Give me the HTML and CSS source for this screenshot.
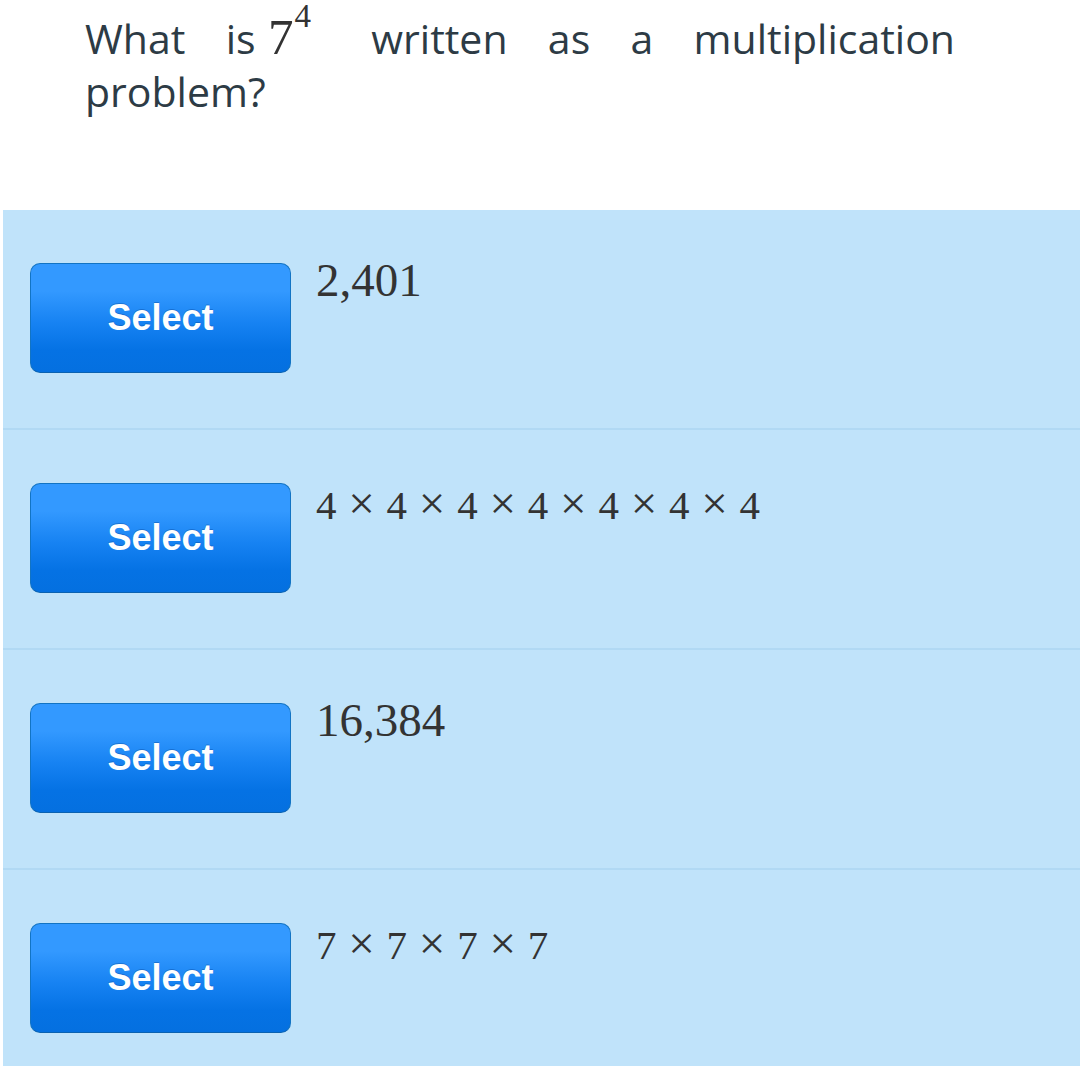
FILE: index.html
```html
<!DOCTYPE html>
<html lang="en">
<head>
  <meta charset="UTF-8" />
  <meta name="viewport" content="width=device-width, initial-scale=1.0"/>
  <title>Exponents</title>
  <link rel="stylesheet" href="styles.css">
</head>
<body>
  <p class="question">
    What is <span class="math">7<sup>4</sup></span> written as a multiplication problem?
  </p>

  <div class="choices">
    <div class="choice">
      <button class="select-btn">Select</button>
      <div class="answer num">2,401</div>
    </div>
    <div class="choice">
      <button class="select-btn">Select</button>
      <div class="answer expr">4<span class="times">×</span>4<span class="times">×</span>4<span class="times">×</span>4<span class="times">×</span>4<span class="times">×</span>4<span class="times">×</span>4</div>
    </div>
    <div class="choice">
      <button class="select-btn">Select</button>
      <div class="answer num">16,384</div>
    </div>
    <div class="choice">
      <button class="select-btn">Select</button>
      <div class="answer expr">7<span class="times">×</span>7<span class="times">×</span>7<span class="times">×</span>7</div>
    </div>
  </div>
</body>
</html>
```

FILE: styles.css
```css
body {
  margin: 0;
  background: #fff;
  font-family: "Open Sans", sans-serif;
}

.question {
  margin: 0;
  padding: 11px 125px 0 85px;
  height: 210px;
  box-sizing: border-box;
  font-size: 41px;
  line-height: 53px;
  color: #2d3b45;
  text-align: justify;
}

.math {
  font-family: "Liberation Serif", serif;
  font-size: 51px;
  color: #333;
  margin-left: -28px;
  margin-right: 20px;
}

.math sup {
  font-size: 33px;
  line-height: 0;
  vertical-align: 0;
  position: relative;
  top: -27px;
  margin-left: 1px;
}

.choices {
  margin-left: 3px;
  background: #c0e3fa;
  height: 856px;
}

.choice {
  display: flex;
  align-items: flex-start;
  gap: 25px;
  padding: 53px 0 55px 27px;
  border-bottom: 2px solid #b1d9f4;
}

.choice:last-child {
  border-bottom: none;
}

.select-btn {
  flex: none;
  width: 261px;
  height: 110px;
  box-sizing: border-box;
  border: 1px solid #1274c4;
  border-bottom-color: #0b62b0;
  border-radius: 10px;
  background: linear-gradient(#3399ff 0%, #3399ff 25%, #1682f2 55%, #0572e4 80%, #0470e0 100%);
  color: #fff;
  font-family: "Liberation Sans", Arial, sans-serif;
  font-weight: bold;
  font-size: 36px;
  text-shadow: 0 -1px 0 rgba(0, 60, 140, 0.35);
  padding: 0;
  cursor: pointer;
}

.answer {
  font-family: "Liberation Serif", serif;
  color: #333;
  line-height: 1;
}

.answer.num {
  font-size: 47px;
  margin-top: -6px;
}

.answer.expr {
  font-size: 41px;
  margin-top: -3px;
}

.times {
  display: inline-block;
  text-align: center;
  font-size: 1.15em;
  width: 0.677em;
  margin: 0 0.193em;
}
```
